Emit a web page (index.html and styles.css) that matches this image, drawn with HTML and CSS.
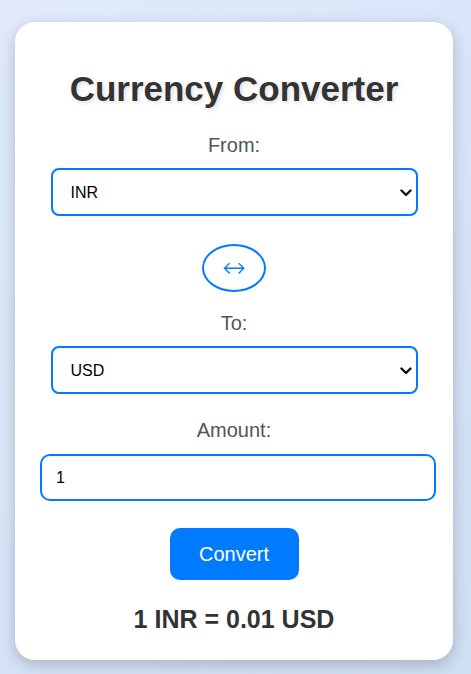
FILE: index.html
```html
<!DOCTYPE html>
<html lang="en">
<head>
<meta charset="UTF-8">
<title>Currency Converter</title>
<link rel="stylesheet" href="styles.css">
</head>
<body>
  <div class="converter">
    <h1 class="title">Currency Converter</h1>

    <label class="field-label" for="from">From:</label>
    <div class="select-wrap">
      <select id="from" class="currency-select">
        <option selected>INR</option>
        <option>USD</option>
        <option>EUR</option>
      </select>
      <svg class="chevron" width="12" height="8" viewBox="0 0 12 8" aria-hidden="true">
        <path d="M1.5 1.5 L6 6 L10.5 1.5" fill="none" stroke="#111" stroke-width="2.4" stroke-linecap="round" stroke-linejoin="round"/>
      </svg>
    </div>

    <button class="swap-btn" type="button">↔</button>

    <label class="field-label" for="to">To:</label>
    <div class="select-wrap">
      <select id="to" class="currency-select">
        <option>INR</option>
        <option selected>USD</option>
        <option>EUR</option>
      </select>
      <svg class="chevron" width="12" height="8" viewBox="0 0 12 8" aria-hidden="true">
        <path d="M1.5 1.5 L6 6 L10.5 1.5" fill="none" stroke="#111" stroke-width="2.4" stroke-linecap="round" stroke-linejoin="round"/>
      </svg>
    </div>

    <label class="field-label" for="amount">Amount:</label>
    <input id="amount" class="amount-input" type="number" value="1">

    <button class="convert-btn" type="button">Convert</button>

    <p class="result">1 INR = 0.01 USD</p>
  </div>
</body>
</html>
```

FILE: styles.css
```css
html, body {
  height: 100%;
}

body {
  margin: 0;
  padding: 22px 18px 0 15px;
  box-sizing: border-box;
  font-family: "Liberation Sans", Arial, sans-serif;
  background: linear-gradient(135deg, #e0eafc, #cfdef3);
}

.converter {
  width: 438px;
  box-sizing: border-box;
  padding: 0 25px 26px;
  background: #fff;
  border-radius: 20px;
  box-shadow: 0 5px 15px rgba(0, 0, 0, 0.2);
  display: flex;
  flex-direction: column;
  align-items: center;
}

.title {
  margin: 47px 0 25px;
  font-size: 35px;
  font-weight: bold;
  color: #333;
  text-shadow: 2px 2px 4px rgba(0, 0, 0, 0.12);
}

.field-label {
  display: block;
  font-size: 20px;
  color: #555;
  margin-bottom: 11px;
}

/* select with a custom chevron drawn over its right edge */
.select-wrap {
  position: relative;
  width: 367px;
  margin-bottom: 25px;
}

.currency-select {
  display: block;
  width: 100%;
  height: 48px;
  padding: 0 18px;
  font-family: "Liberation Sans", Arial, sans-serif;
  font-size: 16px;
  color: #000;
  background: #fff;
  border: 2px solid #007bff;
  border-radius: 8px;
  -webkit-appearance: none;
  appearance: none;
}

.chevron {
  position: absolute;
  right: 6px;
  top: 21px;
  pointer-events: none;
}

.swap-btn {
  width: 64px;
  height: 48px;
  padding: 0;
  margin: 3px 0 20px;
  border: 2px solid #007bff;
  border-radius: 50%;
  background: #fff;
  color: #007bff;
  font-family: "DejaVu Sans", sans-serif;
  font-weight: 200;
  font-size: 28px;
  line-height: 1;
}

.amount-input {
  align-self: flex-start;
  width: 396px;
  height: 47px;
  box-sizing: border-box;
  padding: 0 14px;
  margin: 1px 0 27px;
  font-family: "Liberation Sans", Arial, sans-serif;
  font-size: 16px;
  border: 2px solid #007bff;
  border-radius: 10px;
  -moz-appearance: textfield;
}

.amount-input::-webkit-outer-spin-button,
.amount-input::-webkit-inner-spin-button {
  -webkit-appearance: none;
  margin: 0;
}

.convert-btn {
  width: 129px;
  height: 52px;
  border: none;
  border-radius: 10px;
  background: #007bff;
  color: #fff;
  font-family: "Liberation Sans", Arial, sans-serif;
  font-size: 20px;
}

.result {
  margin: 25px 0 0;
  font-size: 25px;
  font-weight: bold;
  color: #333;
}
```
